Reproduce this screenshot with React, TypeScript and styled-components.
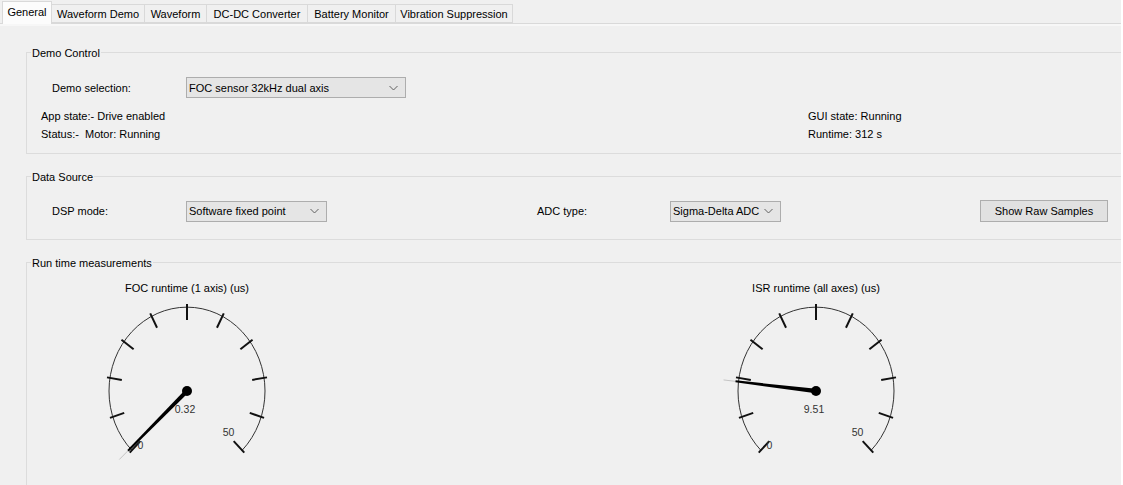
import styled, { createGlobalStyle } from 'styled-components';

const GlobalStyle = createGlobalStyle`
  body {
    margin: 0;
    background: #ffffff;
  }
`;

const Window = styled.div`
  width: 1121px;
  height: 485px;
  overflow: hidden;
  background: #f0f0f0;
  font-family: "Liberation Sans", Arial, sans-serif;
  font-size: 11px;
  color: #000;
`;

const TabBar = styled.div`
  display: flex;
  align-items: flex-end;
  height: 23px;
  padding-left: 2px;
  border-bottom: 1px solid #d9d9d9;
`;

const Tab = styled.div<{ $active?: boolean; $w: number }>`
  box-sizing: border-box;
  width: ${(p) => p.$w}px;
  height: ${(p) => (p.$active ? 23 : 19)}px;
  margin-bottom: ${(p) => (p.$active ? -1 : 0)}px;
  margin-right: -1px;
  display: flex;
  align-items: center;
  justify-content: center;
  padding-bottom: ${(p) => (p.$active ? 2 : 0)}px;
  border: 1px solid #d9d9d9;
  border-bottom: ${(p) => (p.$active ? 'none' : '1px solid #d9d9d9')};
  background: ${(p) => (p.$active ? '#fcfcfc' : '#f0f0f0')};
  white-space: nowrap;
`;

const Panel = styled.div`
  border-top: 2px solid #f7f7f7;
`;

const Group = styled.section<{ $top: number; $pb?: number }>`
  margin: ${(p) => p.$top}px 0 0 26px;
  padding-bottom: ${(p) => p.$pb ?? 0}px;
  border: 1px solid #dcdcdc;
  border-right: none;
`;

const GroupTitle = styled.div`
  width: fit-content;
  height: 14px;
  line-height: 14px;
  margin: -7px 0 0 4px;
  padding: 0 1px;
  background: #f0f0f0;
`;

const Row = styled.div<{ $mt: number }>`
  display: flex;
  align-items: center;
  margin-top: ${(p) => p.$mt}px;
  padding-left: 25px;
`;

const Label = styled.div<{ $w: number; $ml?: number }>`
  width: ${(p) => p.$w}px;
  margin-left: ${(p) => p.$ml ?? 0}px;
  flex: none;
`;

const Combo = styled.div<{ $w: number }>`
  box-sizing: border-box;
  width: ${(p) => p.$w}px;
  height: 21px;
  flex: none;
  display: flex;
  align-items: center;
  justify-content: space-between;
  padding: 0 7px 0 2px;
  background: #e5e5e5;
  border: 1px solid #adadad;
  white-space: nowrap;
`;

const Button = styled.div<{ $ml: number }>`
  box-sizing: border-box;
  width: 128px;
  height: 22px;
  margin-left: ${(p) => p.$ml}px;
  flex: none;
  display: flex;
  align-items: center;
  justify-content: center;
  background: #e1e1e1;
  border: 1px solid #adadad;
`;

const StatusGrid = styled.div`
  display: grid;
  grid-template-columns: 767px auto;
  grid-auto-rows: 18px;
  align-items: center;
  margin-top: 9px;
  padding-left: 14px;
`;

const GaugeRow = styled.div`
  display: flex;
  gap: 429px;
  margin-top: 11px;
  padding-left: 60px;
`;

const GaugeBox = styled.div`
  width: 200px;
  display: flex;
  flex-direction: column;
  align-items: center;
`;

const GaugeTitle = styled.div`
  height: 14px;
  line-height: 14px;
  white-space: nowrap;
`;

const Dial = styled.svg`
  display: block;
`;

function Chevron() {
  return (
    <svg width="9" height="6" viewBox="0 0 9 6">
      <path d="M0.5 1 L4.5 5 L8.5 1" fill="none" stroke="#606060" strokeWidth="1" />
    </svg>
  );
}

function Gauge({ title, value, max }: { title: string; value: number; max: number }) {
  const cx = 100;
  const cy = 96;
  const r = 78;
  const sy = 1.075;
  const pt = (deg: number, rad: number) => {
    const a = (deg * Math.PI) / 180;
    return [cx + rad * Math.cos(a), cy - rad * Math.sin(a) * sy];
  };
  const [sx0, sy0] = pt(225, r);
  const [ex0, ey0] = pt(-45, r);
  const ticks = Array.from({ length: 11 }, (_, i) => {
    const deg = 225 - 27 * i;
    const [x1, y1] = pt(deg, r - 12);
    const [x2, y2] = pt(deg, r + 3);
    return <line key={i} x1={x1} y1={y1} x2={x2} y2={y2} stroke="#111" strokeWidth="2" />;
  });
  const deg = 225 - (value / max) * 270;
  const a = (deg * Math.PI) / 180;
  const px = Math.sin(a);
  const py = Math.cos(a);
  const [tx, ty] = pt(deg, 81);
  const [fx, fy] = pt(deg, 93);
  const needle = [
    `${cx + px * 2.2},${cy + py * 2.2}`,
    `${tx + px * 1},${ty + py * 1}`,
    `${tx - px * 1},${ty - py * 1}`,
    `${cx - px * 2.2},${cy - py * 2.2}`,
  ].join(' ');

  return (
    <GaugeBox>
      <GaugeTitle>{title}</GaugeTitle>
      <Dial width="200" height="175" viewBox="0 0 200 175">
        <path
          d={`M ${sx0} ${sy0} A ${r} ${r * sy} 0 1 1 ${ex0} ${ey0}`}
          fill="none"
          stroke="#333"
          strokeWidth="1"
        />
        {ticks}
        <line x1={tx} y1={ty} x2={fx} y2={fy} stroke="#b0b0b0" strokeWidth="0.7" />
        <polygon points={needle} fill="#000" />
        <circle cx={cx} cy={cy} r="5" fill="#000" />
        <g fontFamily='"Liberation Sans", Arial, sans-serif' fontSize="10.5" fill="#333" textAnchor="middle">
          <text x={cx - 2} y={cy + 22}>{value.toFixed(2)}</text>
          <text x={cx - 46.5} y={cy + 58}>0</text>
          <text x={cx + 41.5} y={cy + 45}>{max}</text>
        </g>
      </Dial>
    </GaugeBox>
  );
}

const tabs: [string, number][] = [
  ['General', 50],
  ['Waveform Demo', 94],
  ['Waveform', 63],
  ['DC-DC Converter', 102],
  ['Battery Monitor', 89],
  ['Vibration Suppression', 118],
];

export default function App() {
  return (
    <Window>
      <GlobalStyle />
      <TabBar>
        {tabs.map(([name, w], i) => (
          <Tab key={name} $w={w} $active={i === 0}>
            {name}
          </Tab>
        ))}
      </TabBar>
      <Panel>
        <Group $top={26} $pb={10}>
          <GroupTitle>Demo Control</GroupTitle>
          <Row $mt={17}>
            <Label $w={134}>Demo selection:</Label>
            <Combo $w={220}>
              <span>FOC sensor 32kHz dual axis</span>
              <Chevron />
            </Combo>
          </Row>
          <StatusGrid>
            <div>App state:- Drive enabled</div>
            <div>GUI state: Running</div>
            <div>Status:- &nbsp;Motor: Running</div>
            <div>Runtime: 312 s</div>
          </StatusGrid>
        </Group>

        <Group $top={22} $pb={17}>
          <GroupTitle>Data Source</GroupTitle>
          <Row $mt={16}>
            <Label $w={134}>DSP mode:</Label>
            <Combo $w={141}>
              <span>Software fixed point</span>
              <Chevron />
            </Combo>
            <Label $w={133} $ml={210}>ADC type:</Label>
            <Combo $w={111}>
              <span>Sigma-Delta ADC</span>
              <Chevron />
            </Combo>
            <Button $ml={199}>Show Raw Samples</Button>
          </Row>
        </Group>

        <Group $top={22} $pb={40}>
          <GroupTitle>Run time measurements</GroupTitle>
          <GaugeRow>
            <Gauge title="FOC runtime (1 axis) (us)" value={0.32} max={50} />
            <Gauge title="ISR runtime (all axes) (us)" value={9.51} max={50} />
          </GaugeRow>
        </Group>
      </Panel>
    </Window>
  );
}
